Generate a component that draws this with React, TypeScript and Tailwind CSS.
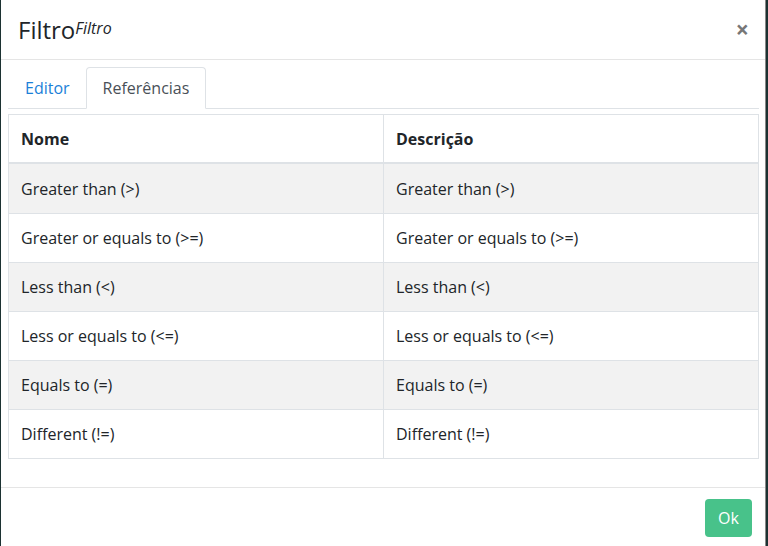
export default function App() {
  const rows = [
    ["Greater than (>)", "Greater than (>)"],
    ["Greater or equals to (>=)", "Greater or equals to (>=)"],
    ["Less than (<)", "Less than (<)"],
    ["Less or equals to (<=)", "Less or equals to (<=)"],
    ["Equals to (=)", "Equals to (=)"],
    ["Different (!=)", "Different (!=)"],
  ];
  return (
    <div className="w-[768px] h-[546px] overflow-hidden bg-[#1c3232] flex" style={{ fontFamily: '"Open Sans", sans-serif' }}>
      <div className="ml-[1px] w-[765px] h-[560px] bg-white border-r border-[#888] flex flex-col text-[#212529]">
        <div className="h-[60px] flex items-center justify-between pl-[17px] pr-[16px] border-b border-[#e5e5e5]">
          <div className="flex items-start">
            <span className="text-[24px] leading-none">Filtro</span>
            <span className="text-[16px] italic leading-none mt-[2px]">Filtro</span>
          </div>
          <span className="text-[#777] text-[23px] font-bold leading-none">×</span>
        </div>
        <div className="pl-[7px] pr-[6px] pt-[7px]">
          <div className="flex border-b border-[#dee2e6] h-[42px] pl-[1px]">
            <div className="px-[16px] flex items-center text-[16px] text-[#1b7fd8]">Editor</div>
            <div className="px-[16px] flex items-center text-[16px] text-[#495057] border border-[#dee2e6] border-b-white rounded-t-[4px] -mb-px bg-white">Referências</div>
          </div>
          <div className="mt-[5px] border border-[#dee2e6] text-[16px]">
            <div className="grid grid-cols-[375px_1fr] h-[49px] border-b-2 border-[#dee2e6] font-bold">
              <div className="px-[12px] flex items-center border-r border-[#dee2e6]">Nome</div>
              <div className="px-[12px] flex items-center">Descrição</div>
            </div>
            {rows.map((r, i) => (
              <div key={i} className={`grid grid-cols-[375px_1fr] h-[49px] ${i > 0 ? "border-t border-[#dee2e6]" : ""} ${i % 2 === 0 ? "bg-[#f2f2f2]" : "bg-white"}`}>
                <div className="px-[12px] flex items-center border-r border-[#dee2e6]">{r[0]}</div>
                <div className="px-[12px] flex items-center">{r[1]}</div>
              </div>
            ))}
          </div>
        </div>
        <div className="mt-[28px] border-t border-[#e5e5e5] flex justify-end pr-[13px] pt-[11px]">
          <button className="w-[47px] h-[38px] bg-[#48c28a] text-white rounded-[4px] text-[16px]">Ok</button>
        </div>
      </div>
    </div>
  );
}
